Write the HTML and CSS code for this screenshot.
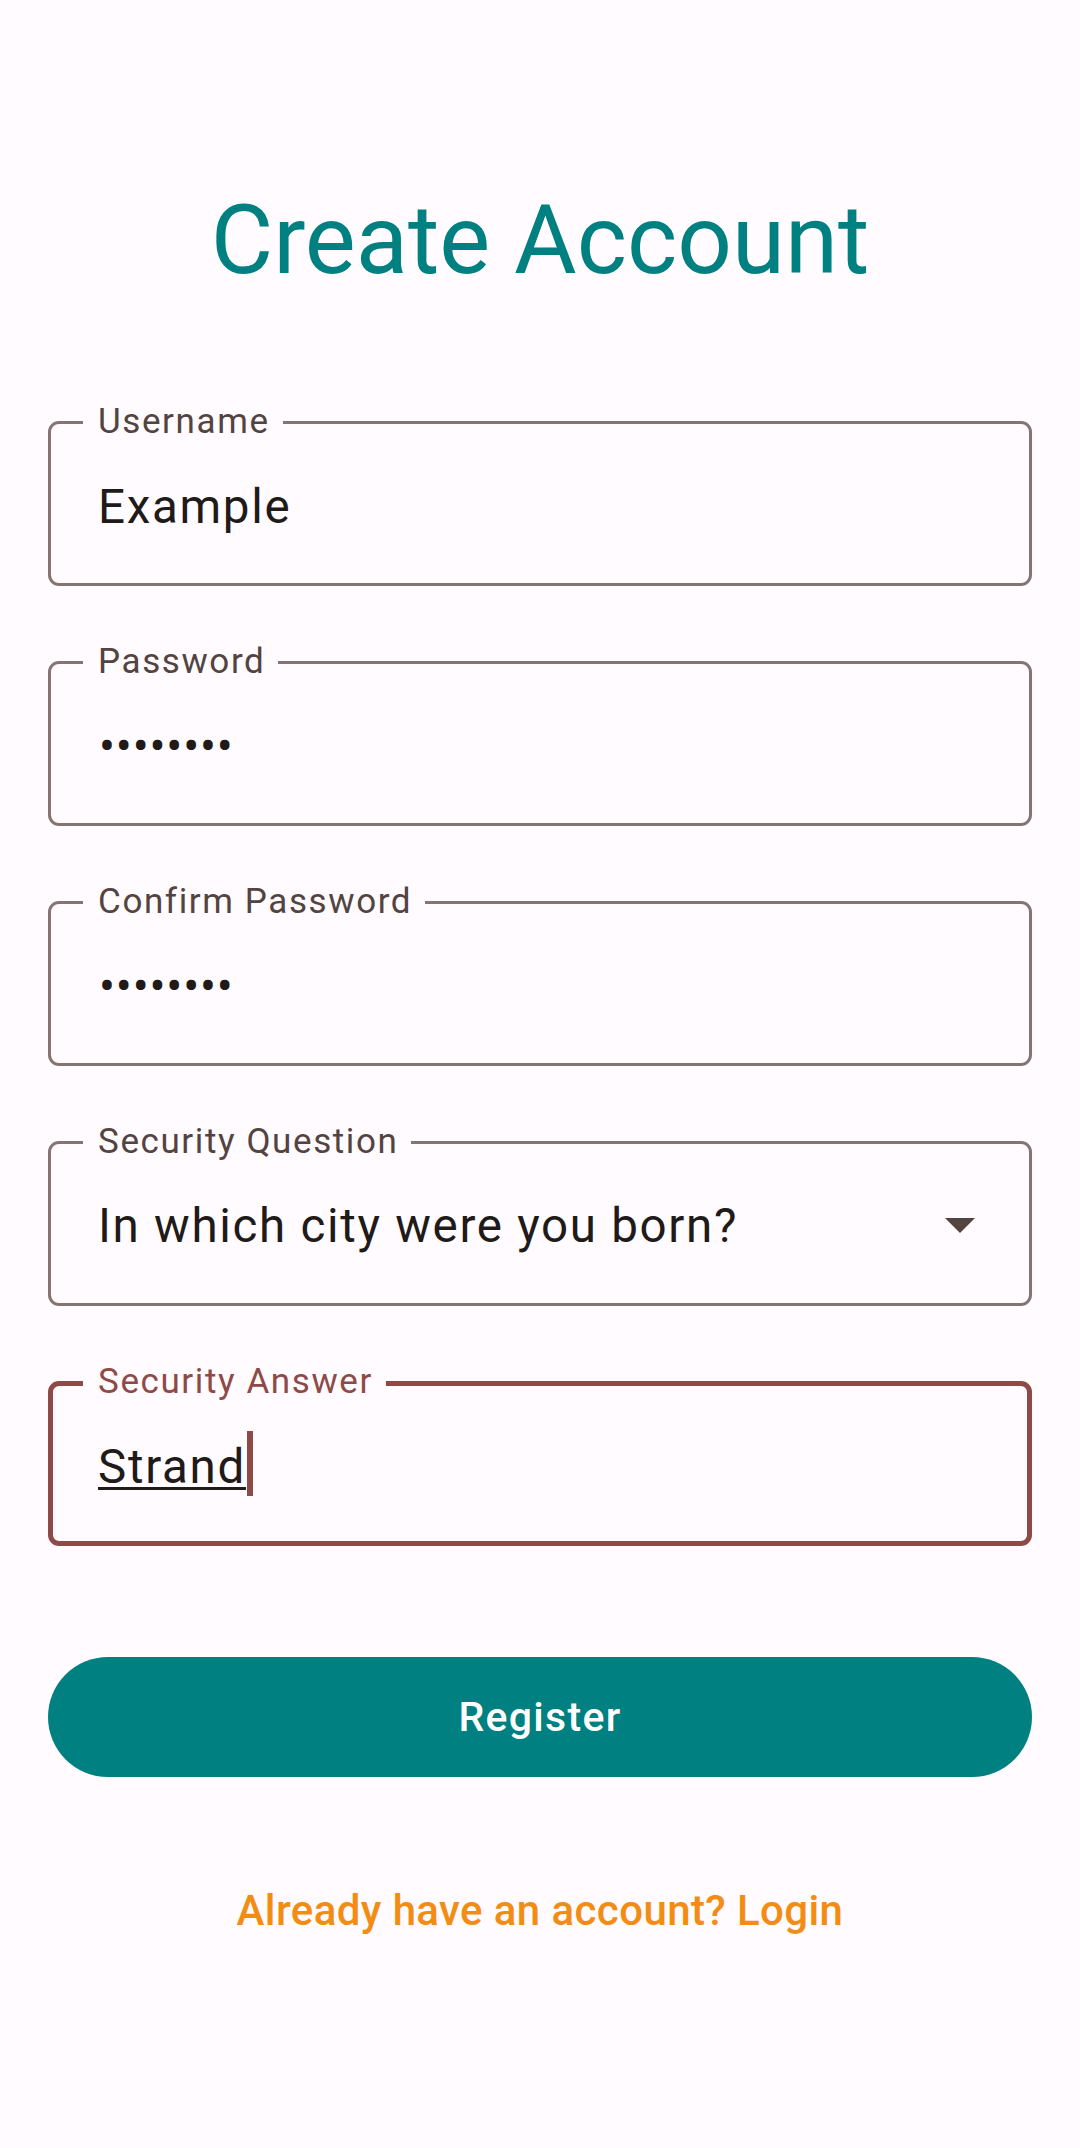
FILE: index.html
```html
<!DOCTYPE html>
<html lang="en">
<head>
<meta charset="utf-8">
<title>Create Account</title>
<link rel="stylesheet" href="styles.css">
</head>
<body>
<main class="screen">
  <h1 class="title">Create Account</h1>
  <form class="form">
    <div class="field">
      <span class="label">Username</span>
      <div class="value">Example</div>
    </div>
    <div class="field">
      <span class="label">Password</span>
      <div class="value dots">••••••••</div>
    </div>
    <div class="field">
      <span class="label">Confirm Password</span>
      <div class="value dots">••••••••</div>
    </div>
    <div class="field field-select">
      <span class="label">Security Question</span>
      <div class="value">In which city were you born?</div>
      <svg class="arrow" viewBox="0 0 24 24" width="72" height="72" aria-hidden="true"><path d="M7 10l5 5 5-5z"/></svg>
    </div>
    <div class="field field-focused">
      <span class="label">Security Answer</span>
      <div class="value"><span class="composing">Strand</span><span class="cursor"></span></div>
    </div>
    <button type="button" class="register">Register</button>
    <a class="login" href="#">Already have an account? Login</a>
  </form>
</main>
</body>
</html>
```

FILE: styles.css
```css
html, body {
  margin: 0;
  padding: 0;
  background: #fffbff;
}

body {
  font-family: Roboto, "Noto Sans", "Liberation Sans", sans-serif;
  color: #201a19;
  width: 1080px;
  height: 2148px;
}

.screen {
  padding: 184px 48px 0;
  display: flex;
  flex-direction: column;
}

.title {
  margin: 0;
  font-size: 96px;
  line-height: 112px;
  font-weight: 400;
  color: #008080;
  text-align: center;
}

.form {
  margin-top: 125px;
  display: flex;
  flex-direction: column;
  gap: 75px;
}

.field {
  position: relative;
  height: 165px;
  box-sizing: border-box;
  border: 3px solid #857472;
  border-radius: 11px;
  padding: 55px 50px 0 47px;
}

.label {
  position: absolute;
  top: -22px;
  left: 32px;
  padding: 0 13px 0 15px;
  background: #fffbff;
  font-size: 35px;
  line-height: 40px;
  letter-spacing: 1.6px;
  color: #534341;
}

.value {
  font-size: 47.5px;
  line-height: 56px;
  letter-spacing: 1.7px;
  color: #201a19;
  white-space: nowrap;
}

.dots {
  letter-spacing: 0.8px;
  font-weight: 400;
  padding-left: 1px;
}

.field-select {
  display: flex;
  align-items: center;
  padding-top: 0;
  padding-right: 33px;
}

.field-select .value {
  flex: 1;
  margin-top: 4px;
}

.arrow {
  fill: #534341;
  margin: -8px 0;
  flex: none;
}

.field-focused {
  border: 5px solid #8d4a47;
  padding: 53px 48px 0 45px;
}

.field-focused .label {
  top: -24px;
  left: 30px;
  color: #8d4a47;
}

.composing {
  text-decoration: underline;
  text-decoration-thickness: 3px;
  text-underline-offset: 4px;
}

.cursor {
  display: inline-block;
  width: 6px;
  height: 65px;
  margin-top: -9px;
  margin-left: 1px;
  vertical-align: -13px;
  background: #8d4a47;
}

.register {
  margin-top: 36px;
  height: 120px;
  border: none;
  border-radius: 60px;
  background: #008080;
  color: #ffffff;
  font-family: Roboto, "Noto Sans", "Liberation Sans", sans-serif;
  font-size: 41px;
  font-weight: 500;
  letter-spacing: 1.3px;
  padding: 0;
}

.login {
  margin-top: 34px;
  align-self: center;
  font-size: 42px;
  line-height: 50px;
  font-weight: 500;
  letter-spacing: 0.4px;
  color: #f28c13;
  text-decoration: none;
}
```
